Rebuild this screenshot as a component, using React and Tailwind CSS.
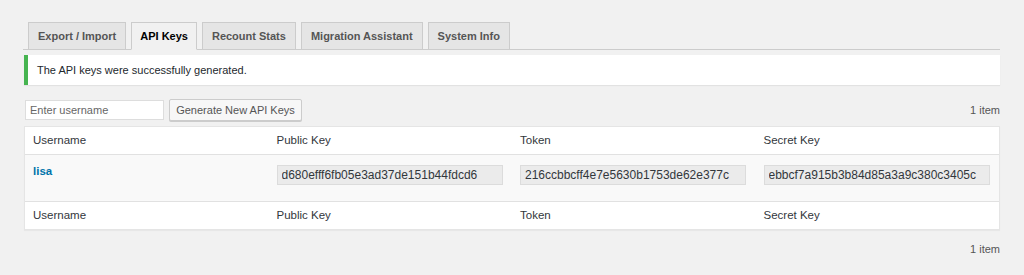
import React from "react";

const tabs = ["Export / Import", "API Keys", "Recount Stats", "Migration Assistant", "System Info"];

const keys = {
  user: "lisa",
  publicKey: "d680efff6fb05e3ad37de151b44fdcd6",
  token: "216ccbbcff4e7e5630b1753de62e377c",
  secret: "ebbcf7a915b3b84d85a3a9c380c3405c",
};

const HeadRow = ({ top }) => (
  <div className={`grid grid-cols-4 h-[28px] items-center text-[11.5px] text-[#32373c] ${top ? "border-b" : "border-t"} border-[#e1e1e1]`}>
    <div className="pl-[8px]">Username</div>
    <div className="pl-[8px]">Public Key</div>
    <div className="pl-[8px]">Token</div>
    <div className="pl-[8px]">Secret Key</div>
  </div>
);

const KeyField = ({ value }) => (
  <input
    readOnly
    value={value}
    className="w-[226px] h-[20px] px-[4px] bg-[#ebebeb] border border-[#dcdcdc] text-[12px] text-[#32373c] outline-none"
  />
);

const App = () => {
  return (
    <div className="min-h-[275px] w-full bg-[#f1f1f1] pt-[22px] text-[#444]" style={{ fontFamily: '"Liberation Sans", Arial, sans-serif' }}>
      {/* tabs */}
      <div className="ml-[23px] w-[977px] flex items-end border-b border-[#ccc] pl-[5px] gap-[5px]">
        {tabs.map((t) =>
          t === "API Keys" ? (
            <div key={t} className="h-[28px] -mb-px px-[8px] flex items-center border border-[#ccc] border-b-[#f1f1f1] bg-[#f1f1f1] text-[11px] font-bold text-black">
              {t}
            </div>
          ) : (
            <div key={t} className="h-[27px] px-[9px] flex items-center border border-b-0 border-[#ccc] bg-[#e5e5e5] text-[11px] font-bold text-[#555]">
              {t}
            </div>
          )
        )}
      </div>

      <div className="ml-[24px] w-[976px]">
        {/* notice */}
        <div className="mt-[5px] h-[30px] flex items-center bg-white border-l-4 border-[#46b450] pl-[9px] text-[11px] text-[#23282d] shadow-[0_1px_1px_rgba(0,0,0,0.06)]">
          The API keys were successfully generated.
        </div>

        {/* form */}
        <div className="mt-[14px] flex items-center">
          <input
            placeholder="Enter username"
            className="ml-px w-[139px] h-[20px] px-[4px] bg-white border border-[#ddd] text-[11px] placeholder:text-[#666] outline-none"
          />
          <button className="ml-[5px] w-[133px] h-[22px] bg-[#f7f7f7] border border-[#ccc] rounded-[2px] text-[11px] text-[#555] shadow-[0_1px_0_#ccc]">
            Generate New API Keys
          </button>
          <div className="ml-auto text-[11px] text-[#555]">1 item</div>
        </div>

        {/* table */}
        <div className="mt-[5px] bg-white border border-[#e5e5e5] shadow-[0_1px_1px_rgba(0,0,0,0.04)]">
          <HeadRow top />
          <div className="grid grid-cols-4 h-[46px] items-start bg-[#f9f9f9] pt-[7px]">
            <div className="pl-[8px] pt-[1px] text-[11.5px] font-bold text-[#0073aa]">{keys.user}</div>
            <div className="pl-[8px]"><KeyField value={keys.publicKey} /></div>
            <div className="pl-[8px]"><KeyField value={keys.token} /></div>
            <div className="pl-[8px]"><KeyField value={keys.secret} /></div>
          </div>
          <HeadRow />
        </div>

        <div className="mt-[11px] text-right text-[11px] text-[#555]">1 item</div>
      </div>
    </div>
  );
};

export default App;
